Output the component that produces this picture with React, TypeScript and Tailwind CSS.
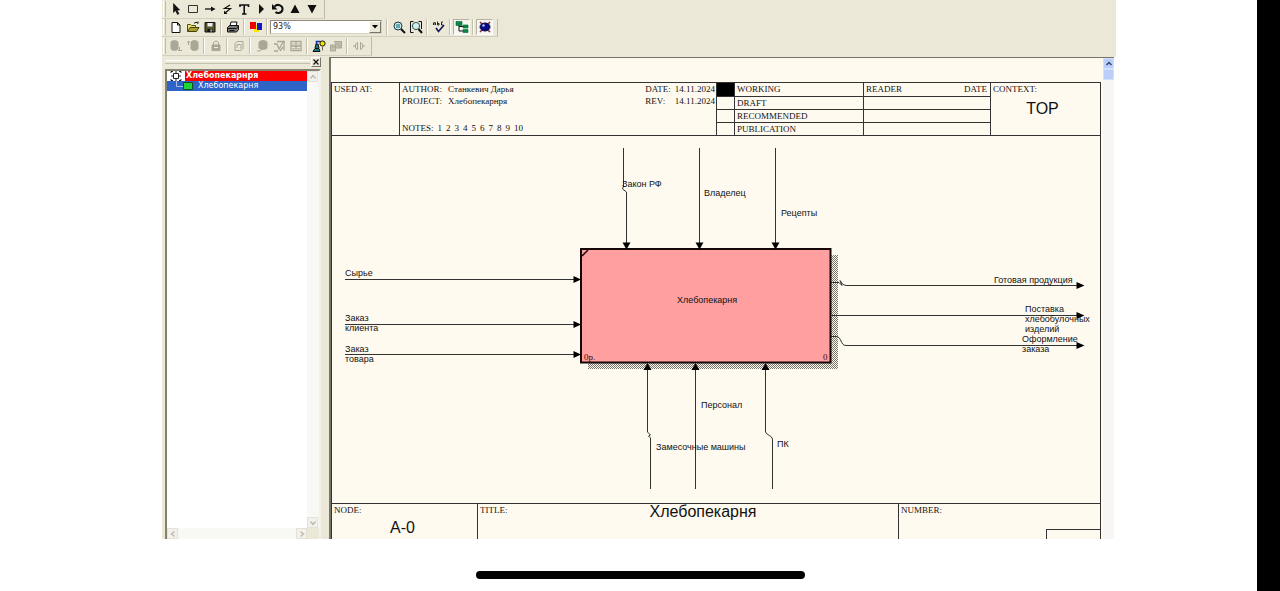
import type { ReactNode } from "react";

interface ToolProps {
  label: string;
  pressed?: boolean;
  disabled?: boolean;
  children: ReactNode;
}

function Tool({ label, pressed, disabled, children }: ToolProps) {
  return (
    <button
      type="button"
      aria-label={label}
      aria-pressed={pressed}
      disabled={disabled}
      className={
        pressed
          ? "flex h-4 w-[17px] items-center justify-center border border-[#b5b2a2] border-r-white border-b-white bg-[#f6f5ef]"
          : "flex h-4 w-[17px] items-center justify-center"
      }
    >
      <svg viewBox="0 0 14 14" className="h-3.5 w-3.5 shrink-0" fill="none" stroke={disabled ? "#aaa796" : "#111"}>
        {children}
      </svg>
    </button>
  );
}

function Separator() {
  return (
    <span className="flex h-4 w-1.5 justify-center">
      <span className="w-0.5 border-r border-l border-r-white border-l-[#c2bfae]" />
    </span>
  );
}

function Toolbar({ label, children }: { label: string; children: ReactNode }) {
  return (
    <div
      role="toolbar"
      aria-label={label}
      className="flex h-5 w-max items-center border-r border-b border-[#bdbaa9] border-b-[#d2cfbf] pr-1"
    >
      <span className="mr-px ml-px h-4 w-[3px] border-r border-l border-r-[#bdbaa9] border-l-white" />
      {children}
    </div>
  );
}

function DrawTools() {
  return (
    <Toolbar label="Drawing">
      <Tool label="Pointer">
        <path d="M4.500 1.500v9l2-2 2 4 1.500-.8-2-3.700h2.700z" fill="#111" strokeWidth=".6" />
      </Tool>
      <Tool label="Activity box">
        <path d="M2.500 3.500h9v7h-9z" stroke="#333" />
      </Tool>
      <Tool label="Arrow">
        <path d="M2 7h7" strokeWidth="1.300" />
        <path d="M8 4.500 12.500 7 8 9.500z" fill="#111" stroke="none" />
      </Tool>
      <Tool label="Squiggle">
        <path d="M10 3 4.500 6.500h6L5 11" strokeWidth="1.200" />
        <path d="M4 8.500v3.500h3.500z" fill="#111" stroke="none" />
      </Tool>
      <Tool label="Text">
        <path d="M3 5V3h8.500v2M7.200 3v9M5 12h4.500" strokeWidth="1.600" />
      </Tool>
      <Tool label="Diagram dictionary">
        <path d="M5 2v10l5-5z" fill="#111" stroke="none" />
      </Tool>
      <Tool label="Sibling diagram">
        <path d="M3.500 4.500C7 1 12 4 11.500 7.500c-.5 3.500-5 4.500-7 2.500" strokeWidth="2" />
        <path d="M1 2v5.500h5.500z" fill="#111" stroke="none" />
      </Tool>
      <Tool label="Parent diagram">
        <path d="m7 2.500 4.500 8.500h-9z" fill="#111" stroke="none" />
      </Tool>
      <Tool label="Child diagram">
        <path d="M2.500 3h9L7 11.500z" fill="#111" stroke="none" />
      </Tool>
    </Toolbar>
  );
}

function StandardTools() {
  return (
    <Toolbar label="Standard">
      <Tool label="New">
        <path d="M3 2.500h5.500L11 5v7.500H3zM8.500 2.500V5H11" fill="#fff" />
      </Tool>
      <Tool label="Open">
        <path d="M1.500 11.500v-7h3l1 1h4v2" fill="#e8e070" stroke="#55550a" />
        <path d="m1.500 11.500 2.500-4h9l-2.500 4z" fill="#a8a028" stroke="#44440a" />
        <path d="M8 3.500c1-1.500 3-1.500 4 0v-2" />
      </Tool>
      <Tool label="Save">
        <path d="M2 2.500h10v9.500H2z" fill="#55552a" />
        <path d="M4.500 3h5v3.500h-5z" fill="#eee" stroke="none" />
        <path d="M4.500 9h5v3h-5z" fill="#111" stroke="none" />
        <path d="M7.500 9.500h1.200v2H7.500z" fill="#eee" stroke="none" />
      </Tool>
      <Separator />
      <Tool label="Print">
        <path d="m4 6 1-4h6l-1 4" fill="#fff" />
        <path d="m1.500 7.500 2-2h9v4l-2 2.500h-9z" fill="#7c7c7c" />
        <path d="M2 8.500h8.500M10.500 8.500l2-2.500M3.500 10.500h5" />
      </Tool>
      <Separator />
      <Tool label="Colors">
        <path d="M5 5h5v7H5z" fill="#ffe800" stroke="none" />
        <path d="M1 2h6v7H1z" fill="#f00000" stroke="none" />
        <path d="M8 3h5v7H8z" fill="#1018c8" stroke="none" />
      </Tool>
      <Separator />
      <div className="mr-0.5 flex h-3.5 w-28 items-stretch border border-[#8f8c7d] border-r-[#d8d5c6] border-b-[#d8d5c6] bg-white">
        <input
          type="text"
          aria-label="Zoom level"
          defaultValue="93%"
          className="min-w-0 flex-1 bg-white px-0.5 font-['DejaVu_Sans',sans-serif] text-[8px] leading-3 text-[#222] outline-none"
        />
        <button
          type="button"
          aria-label="Show zoom levels"
          className="flex w-3 items-center justify-center border border-white border-r-[#77756a] border-b-[#77756a] bg-[#ebe8d8]"
        >
          <svg viewBox="0 0 6 4" className="h-1 w-1.5">
            <path d="M0 0h6L3 3.500z" />
          </svg>
        </button>
      </div>
      <Separator />
      <Tool label="Zoom in">
        <circle cx="6" cy="6" r="4" fill="#c8e8e8" stroke="#234" />
        <path d="M4 5h4M4 7h4" stroke="#067" />
        <path d="m9 9 4 4" strokeWidth="2" />
      </Tool>
      <Tool label="Fit to window">
        <path d="M1.500 4.500v-3h3M9.500 1.500h3v3M1.500 9.500v3h3M1.500 2v10M12.500 2v7" />
        <circle cx="7" cy="6" r="3.600" fill="#d2eeee" stroke="#355" />
        <path d="m9.500 9 3.500 4" strokeWidth="2" />
      </Tool>
      <Separator />
      <Tool label="Spell check">
        <path d="M1.500 5V3l1-1 1 1v2M1.500 4h2M5.500 1.500V5h1.500V3.500H5.500M11 2H9.500v3H11" strokeWidth=".9" />
        <path d="m4 8 2.500 3.500L12 5" stroke="#14145c" strokeWidth="1.600" />
      </Tool>
      <Separator />
      <Tool label="Model explorer" pressed>
        <path d="M4 5v6h4M4 6.500h4" />
        <path d="M1 1.500h6v4H1zM8 5h5v3H8zM8 9.500h5v3H8z" fill="#078a3c" stroke="#064" strokeWidth=".6" />
      </Tool>
      <Separator />
      <Tool label="ModelMart" pressed>
        <path d="M2 2l10 10M12 2 2 12" stroke="#8a3030" strokeWidth="1.500" />
        <ellipse cx="7" cy="7" rx="5" ry="4" fill="#0b0b80" stroke="#0b0b50" />
        <circle cx="5.500" cy="5.500" r="1.200" fill="#b8c8ff" stroke="none" />
      </Tool>
    </Toolbar>
  );
}

function ModelMartTools() {
  return (
    <Toolbar label="ModelMart">
      <Tool label="Open from mart" disabled>
        <path d="M2 3.500C2 1 9 1 9 3.500v6C9 12 2 12 2 9.500z" fill="#aaa796" />
        <path d="M10.500 8v4M9 11.500h4" />
      </Tool>
      <Tool label="Save to mart" disabled>
        <path d="M5 3.500C5 1 12 1 12 3.500v6C12 12 5 12 5 9.500z" fill="#aaa796" />
        <path d="M1 3h3M2.500 2v4" />
      </Tool>
      <Separator />
      <Tool label="Lock" disabled>
        <path d="M4.500 6V4c0-2.500 5-2.500 5 0v2" />
        <path d="M3 6h8v5.500H3z" fill="#aaa796" />
        <path d="M5 8.500h4" stroke="#ebe8d8" />
      </Tool>
      <Separator />
      <Tool label="Refresh" disabled>
        <path d="M3 4.500 5 2.500h6v7l-2 2H3zM5 9V5.500h3.500M9 5v5" />
      </Tool>
      <Separator />
      <Tool label="Review changes" disabled>
        <path d="M4 3.500C4 1 12 1 12 3.500v5c0 2.500-8 2.500-8 0z" fill="#aaa796" />
        <path d="M2 12h3l2-2" />
      </Tool>
      <Tool label="Merge" disabled>
        <path d="M5 2.500h8M12 2.500v9M2 5h3l2 5 4-7M2 12h4M8 12l3-4" strokeWidth="1.300" />
      </Tool>
      <Tool label="Versions" disabled>
        <path d="M2 2.500h10v9H2zM7 2.500v9M2 7h10" strokeWidth="1.300" />
        <path d="M3.500 5h2M8.500 5h2M3.500 9.500h2M8.500 9.500h2" />
      </Tool>
      <Separator />
      <Tool label="Users">
        <path d="M1 12.500h7l-1-3H3zM3 9l1-4h2l1 4" fill="#167a83" />
        <path d="M4.500 5V2.500h4" stroke="#1730b0" strokeWidth="1.600" />
        <circle cx="10.500" cy="4.500" r="2.600" fill="#f3e500" />
        <path d="M10.500 7.500v4" stroke="#666" />
      </Tool>
      <Tool label="Libraries" disabled>
        <path d="M1.500 6h5v6h-5zM5 2.500h7.500V9H7" fill="#c2bfae" />
        <path d="M6 5h4M9 7h3M3 8h3" />
      </Tool>
      <Separator />
      <Tool label="Connect" disabled>
        <path d="M1 7h2M11 7h2M5.500 3.500 3.500 5v4l2 1.500zM8.500 3.500l2 1.500v4l-2 1.500z" />
      </Tool>
    </Toolbar>
  );
}

function ScrollArrow({ label, d }: { label: string; d: string }) {
  return (
    <button
      type="button"
      aria-label={label}
      className="flex h-[11px] w-[11px] shrink-0 items-center justify-center border border-[#e4e2d8] bg-[#f2f1eb]"
    >
      <svg viewBox="0 0 8 8" className="h-2 w-2" fill="none" stroke="#b9b7ac" strokeWidth="1.300">
        <path d={d} />
      </svg>
    </button>
  );
}

function ModelTree() {
  return (
    <aside className="flex w-[168px] shrink-0 flex-col border-l border-white bg-[#ebe8d8] pr-2 pl-[3px]">
      <div className="flex h-3 items-start gap-px">
        <div className="mt-[3px] h-1 flex-1 border-y border-[#c2bfae] border-t-white" />
        <button
          type="button"
          aria-label="Close explorer"
          className="flex h-2.5 w-2.5 items-center justify-center border border-white border-r-[#77756a] border-b-[#77756a]"
        >
          <svg viewBox="0 0 6 6" className="h-1.5 w-1.5" stroke="#111" strokeWidth="1.200">
            <path d="m.5.5 5 5M5.500.5l-5 5" />
          </svg>
        </button>
      </div>
      <div className="flex flex-1 flex-col border-t-2 border-r-2 border-l-2 border-[#85836f] border-r-[#f4f2e8] bg-white">
        <div className="flex flex-1">
          <ul className="flex-1 font-['DejaVu_Sans',sans-serif] text-[8px] leading-[10px] text-white">
            <li>
              <div className="flex h-2.5 items-center bg-[#fb0000]">
                <span className="mr-px flex w-[18px] justify-center bg-white">
                  <svg viewBox="0 0 12 10" className="h-2.5 w-3" fill="none" stroke="#222">
                    <path d="M3.500 2.500h5v5h-5zM6 0v2M6 8v2M1 5h2M9 5h2" />
                    <path d="M1 2V.5h2M9 .5h2V2M1 8v1.500h2M9 9.500h2V8" />
                  </svg>
                </span>
                <span className="font-bold">Хлебопекарнря</span>
              </div>
              <ul>
                <li className="flex h-2.5 items-center bg-[#2e64c8]">
                  <svg viewBox="0 0 31 10" className="h-2.5 w-[31px]">
                    <path d="M9.500 0v5.500H16" fill="none" stroke="#a9c0ee" />
                    <path d="M16.500 1.500h9v7h-9z" fill="#20d23a" stroke="#0b5220" />
                  </svg>
                  <span>Хлебопекарня</span>
                </li>
              </ul>
            </li>
          </ul>
          <div className="flex w-3 flex-col justify-between bg-[#f8f8f4]">
            <ScrollArrow label="Scroll tree up" d="m1.500 5.500 2.500-3 2.500 3" />
            <ScrollArrow label="Scroll tree down" d="m1.500 2.500 2.500 3 2.500-3" />
          </div>
        </div>
        <div className="flex h-[11px] bg-[#ebe8d8] pr-3">
          <div className="flex flex-1 justify-between bg-[#f8f8f4]">
            <ScrollArrow label="Scroll tree left" d="m5.500 1.500-3 2.500 3 2.500" />
            <ScrollArrow label="Scroll tree right" d="m2.500 1.500 3 2.500-3 2.500" />
          </div>
        </div>
      </div>
    </aside>
  );
}

const STATUSES = ["WORKING", "DRAFT", "RECOMMENDED", "PUBLICATION"];

function SheetHeader() {
  return (
    <header className="flex h-[53px] border-b border-[#333] leading-3">
      <div className="w-[68px] border-r border-[#333] pl-0.5">USED AT:</div>
      <div className="flex flex-1 justify-between pr-px pl-0.5">
        <div className="flex flex-col pb-px">
          <div className="flex gap-1.5">
            <span>AUTHOR:</span>
            <span>Станкевич Дарья</span>
          </div>
          <div className="flex gap-1.5">
            <span>PROJECT:</span>
            <span>Хлебопекарнря</span>
          </div>
          <div className="mt-auto flex gap-1">
            <span>NOTES:</span>
            {[1, 2, 3, 4, 5, 6, 7, 8, 9, 10].map((n) => (
              <span key={n}>{n}</span>
            ))}
          </div>
        </div>
        <dl className="grid h-6 grid-cols-[auto_auto] gap-x-1">
          <dt>DATE:</dt>
          <dd>14.11.2024</dd>
          <dt>REV:</dt>
          <dd>14.11.2024</dd>
        </dl>
      </div>
      <table className="w-[275px] table-fixed border-collapse border-x border-[#333]">
        <tbody>
          {STATUSES.map((status, i) => (
            <tr key={status} className="h-[13px] border-b border-[#333] last:border-b-0">
              <td className={i === 0 ? "w-[18px] border-r border-[#333] bg-black p-0" : "w-[18px] border-r border-[#333] p-0"} />
              <td className="w-[129px] border-r border-[#333] py-0 pl-0.5">{status}</td>
              <td className="py-0 pr-[3px] pl-0.5">
                {i === 0 && (
                  <div className="flex justify-between">
                    <span>READER</span>
                    <span>DATE</span>
                  </div>
                )}
              </td>
            </tr>
          ))}
        </tbody>
      </table>
      <div className="w-[109px] pl-0.5">
        <div>CONTEXT:</div>
        <div className="mt-1.5 pr-2 text-center font-['Liberation_Sans',sans-serif] text-base leading-4">TOP</div>
      </div>
    </header>
  );
}

const ARROWS = [
  // controls
  { d: "M623.500 148v38l-1 3 4 3v52", head: "M622.500 242.500h8l-4 7z" },
  { d: "M699.500 148v96", head: "M695.500 242.500h8l-4 7z" },
  { d: "M775.500 148v96", head: "M771.500 242.500h8l-4 7z" },
  // inputs
  { d: "M345 279.500h230", head: "M573.500 276v7l7.500-3.500z" },
  { d: "M345 324.500h230", head: "M573.500 321v7l7.500-3.500z" },
  { d: "M345 354.500h230", head: "M573.500 351v7l7.500-3.500z" },
  // mechanisms
  { d: "M650.500 489v-51l-2-2 2-1-3-3v-64", head: "M643.500 370h8l-4-7z" },
  { d: "M695.500 489V368", head: "M691.500 370h8l-4-7z" },
  { d: "M772.500 489v-50c-1-4-5-3-7-7v-64", head: "M761.500 370h8l-4-7z" },
  // outputs
  { d: "M831 282.500h8l3 3-2-5 3 4 3 1h231", head: "M1076.500 282v7l8-3.500z" },
  { d: "M831 315.500h246", head: "M1076.500 312v7l8-3.500z" },
  { d: "M831 336.500h5c6 0 4 9 10 9h231", head: "M1076.500 342v7l8-3.500z" },
];

const LABELS = [
  { x: 622, y: 187, lines: ["Закон РФ"] },
  { x: 704, y: 196, lines: ["Владелец"] },
  { x: 781, y: 216, lines: ["Рецепты"] },
  { x: 345, y: 276, lines: ["Сырье"] },
  { x: 345, y: 321, lines: ["Заказ", "клиента"] },
  { x: 345, y: 352, lines: ["Заказ", "товара"] },
  { x: 677, y: 303, lines: ["Хлебопекарня"] },
  { x: 701, y: 408, lines: ["Персонал"] },
  { x: 656, y: 450, lines: ["Замесочные машины"] },
  { x: 777, y: 447, lines: ["ПК"] },
  { x: 994, y: 283, lines: ["Готовая продукция"] },
  { x: 1025, y: 312, lines: ["Поставка", "хлебобулочных", "изделий"] },
  { x: 1022, y: 342, lines: ["Оформление", "заказа"] },
];

function ContextDiagram() {
  return (
    <svg viewBox="332 136 768 367" className="min-h-0 w-full flex-1" role="img" aria-label="Хлебопекарня">
      <defs>
        <pattern id="dither" width="2" height="2" patternUnits="userSpaceOnUse">
          <path d="M0 0h1v1H0zM1 1h1v1H1z" fill="#77746c" />
        </pattern>
      </defs>
      <path d="M588 255h250v114H588z" fill="url(#dither)" />
      <path d="M581 249h249.500v113.500H581z" fill="#ff9f9f" stroke="#160808" strokeWidth="2" />
      <path d="m582 256 6-6" stroke="#160808" strokeWidth="1.500" />
      {ARROWS.map((arrow) => (
        <g key={arrow.head}>
          <path d={arrow.d} fill="none" stroke="#333" />
          <path d={arrow.head} fill="#000" />
        </g>
      ))}
      <g className="font-['Liberation_Sans',sans-serif] text-[9px]" fill="#111">
        {LABELS.map((label) => (
          <text key={label.y + label.lines[0]} x={label.x} y={label.y}>
            {label.lines.map((line, i) => (
              <tspan key={line} x={label.x} dy={i === 0 ? 0 : 10}>
                {line}
              </tspan>
            ))}
          </text>
        ))}
      </g>
      <g className="font-['Liberation_Serif',serif] text-[9px]" fill="#3c0505">
        <text x="584" y="360">0р.</text>
        <text x="823" y="360">0</text>
      </g>
    </svg>
  );
}

function SheetFooter() {
  return (
    <footer className="flex h-9 border-t border-[#333] leading-3">
      <div className="w-[146px] border-r border-[#333] pl-0.5">
        <div>NODE:</div>
        <div className="pr-1.5 text-center font-['Liberation_Sans',sans-serif] text-base leading-6">A-0</div>
      </div>
      <div className="flex flex-1 border-r border-[#333] pl-0.5">
        <div className="w-7">TITLE:</div>
        <h1 className="flex-1 text-center font-['Liberation_Sans',sans-serif] text-base leading-4">Хлебопекарня</h1>
      </div>
      <div className="flex w-[201px] justify-between pl-0.5">
        <span>NUMBER:</span>
        <div className="mt-[25px] w-[54px] border-t border-l border-[#333]" />
      </div>
    </footer>
  );
}

function DiagramCanvas() {
  return (
    <section className="flex min-w-0 flex-1 border-t border-l-2 border-[#77756a] bg-[#fffaf0]">
      <div className="mr-0.5 flex min-w-0 flex-1 flex-col pt-6">
        <div className="flex flex-1 flex-col border-x border-t border-[#333] font-['Liberation_Serif',serif] text-[9px] text-[#111]">
          <SheetHeader />
          <ContextDiagram />
          <SheetFooter />
        </div>
      </div>
      <div className="flex w-[11px] flex-col bg-[#f7f6f4]">
        <button
          type="button"
          aria-label="Scroll diagram up"
          className="flex h-[11px] items-center justify-center border border-[#d5e0fc] bg-[#bccffa]"
        >
          <svg viewBox="0 0 8 8" className="h-2 w-2" fill="none" stroke="#33486f" strokeWidth="1.500">
            <path d="m1.500 5 2.500-2.500L6.500 5" />
          </svg>
        </button>
        <div className="h-[11px] border border-[#d5e0fc] bg-[#bccffa]" />
      </div>
    </section>
  );
}

export default function App() {
  return (
    <div className="relative flex min-h-screen flex-col bg-white">
      <main className="flex flex-1 flex-col pr-[164px] pl-[161px]">
        <div className="flex h-[57px] flex-col justify-end border-l border-white bg-[#ebe8d8] pb-px">
          <DrawTools />
          <StandardTools />
          <ModelMartTools />
        </div>
        <div className="flex flex-1 pr-0.5">
          <ModelTree />
          <DiagramCanvas />
        </div>
      </main>
      <div className="flex justify-center pt-8 pb-3">
        <div className="h-2 w-[329px] rounded-full bg-black" />
      </div>
      <div className="absolute inset-y-0 right-0 w-[23px] bg-black" />
    </div>
  );
}
